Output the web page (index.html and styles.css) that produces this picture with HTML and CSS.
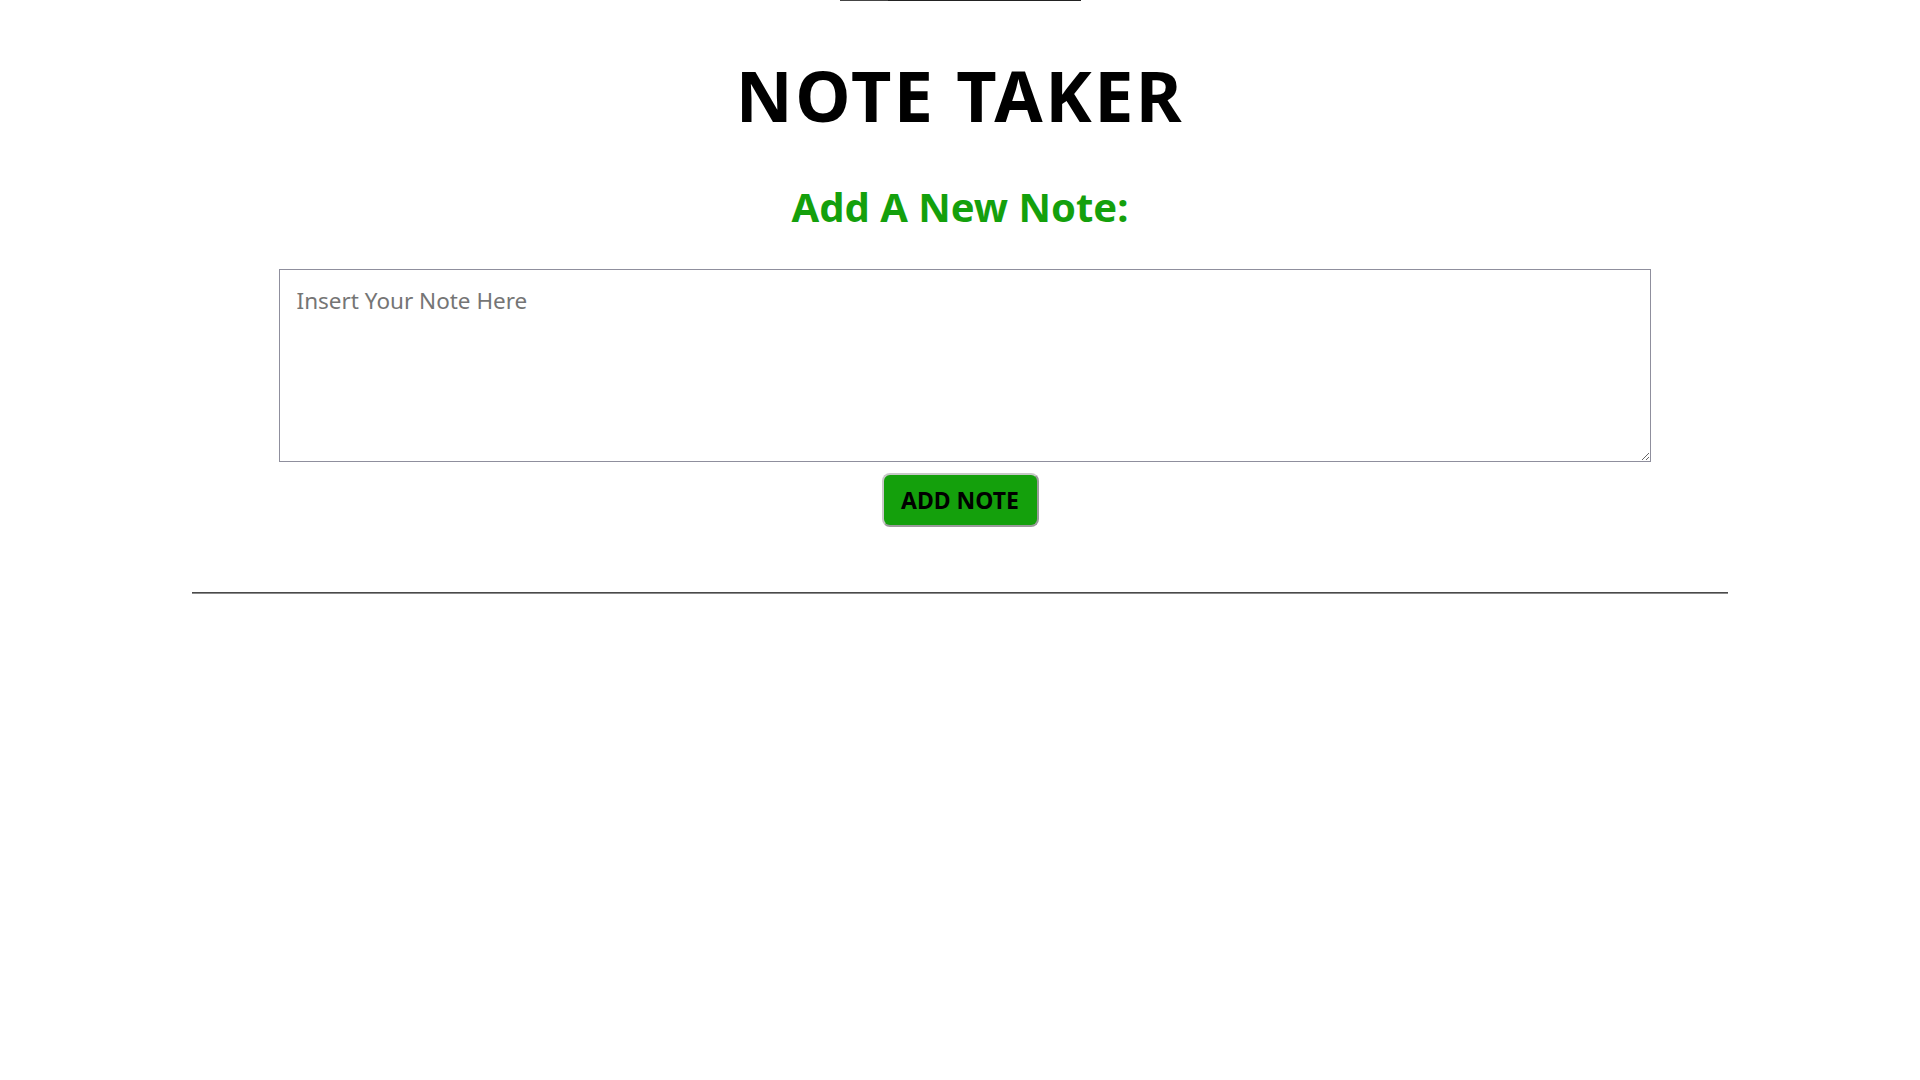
FILE: index.html
```html
<!DOCTYPE html>
<html lang="en">
<head>
<meta charset="utf-8">
<title>Note Taker</title>
<link rel="stylesheet" href="styles.css">
</head>
<body>
<div class="topline"></div>
<main class="page">
  <h1 class="title">NOTE TAKER</h1>
  <h2 class="subtitle">Add A New Note:</h2>
  <form class="note-form">
    <textarea class="note-input" placeholder="Insert Your Note Here"></textarea>
    <button type="button" class="add-btn">ADD NOTE</button>
  </form>
  <hr class="divider">
</main>
</body>
</html>
```
FILE: styles.css
```css
html, body {
  margin: 0;
  padding: 0;
  background: #ffffff;
}
body {
  font-family: "Noto Sans", "Open Sans", sans-serif;
  color: #000;
}
.topline {
  width: 241px;
  height: 1px;
  margin-left: 840px;
  background: linear-gradient(to right, #444 0 48px, #222 48px);
}
.page {
  display: flex;
  flex-direction: column;
  align-items: center;
}
.title {
  margin: 54px 0 0 0;
  font-size: 70px;
  line-height: 80px;
  font-weight: 700;
  letter-spacing: 2.5px;
}
.subtitle {
  margin: 47px 0 0 0;
  font-size: 40px;
  line-height: 50px;
  font-weight: 700;
  color: #14a00c;
}
.note-form {
  display: flex;
  flex-direction: column;
  align-items: center;
  margin-top: 37px;
  width: 100%;
}
.note-input {
  box-sizing: border-box;
  width: 1372px;
  height: 193px;
  margin-left: 9px;
  border: 1px solid #8f8f9d;
  border-radius: 0;
  padding: 15px 17px;
  font-family: "Noto Sans", "Open Sans", sans-serif;
  font-size: 22.5px;
  line-height: 32px;
  color: #000;
  resize: both;
  outline: none;
}
.note-input::placeholder {
  color: #757575;
}
.add-btn {
  box-sizing: border-box;
  margin-top: 11px;
  width: 157px;
  height: 54px;
  background: #14a00c;
  border: 2px solid #c8c8c8;
  border-bottom-color: #9a9a9a;
  border-right-color: #9a9a9a;
  border-radius: 8px;
  font-family: "Noto Sans", "Open Sans", sans-serif;
  font-size: 23px;
  font-weight: 700;
  color: #000;
  padding: 0;
  cursor: pointer;
}
.divider {
  box-sizing: content-box;
  width: 1536px;
  height: 0;
  margin: 65px 0 0 0;
  border: 0;
  border-top: 1px solid #4a4a4a;
  border-bottom: 1px solid #8a8a8a;
}
```
